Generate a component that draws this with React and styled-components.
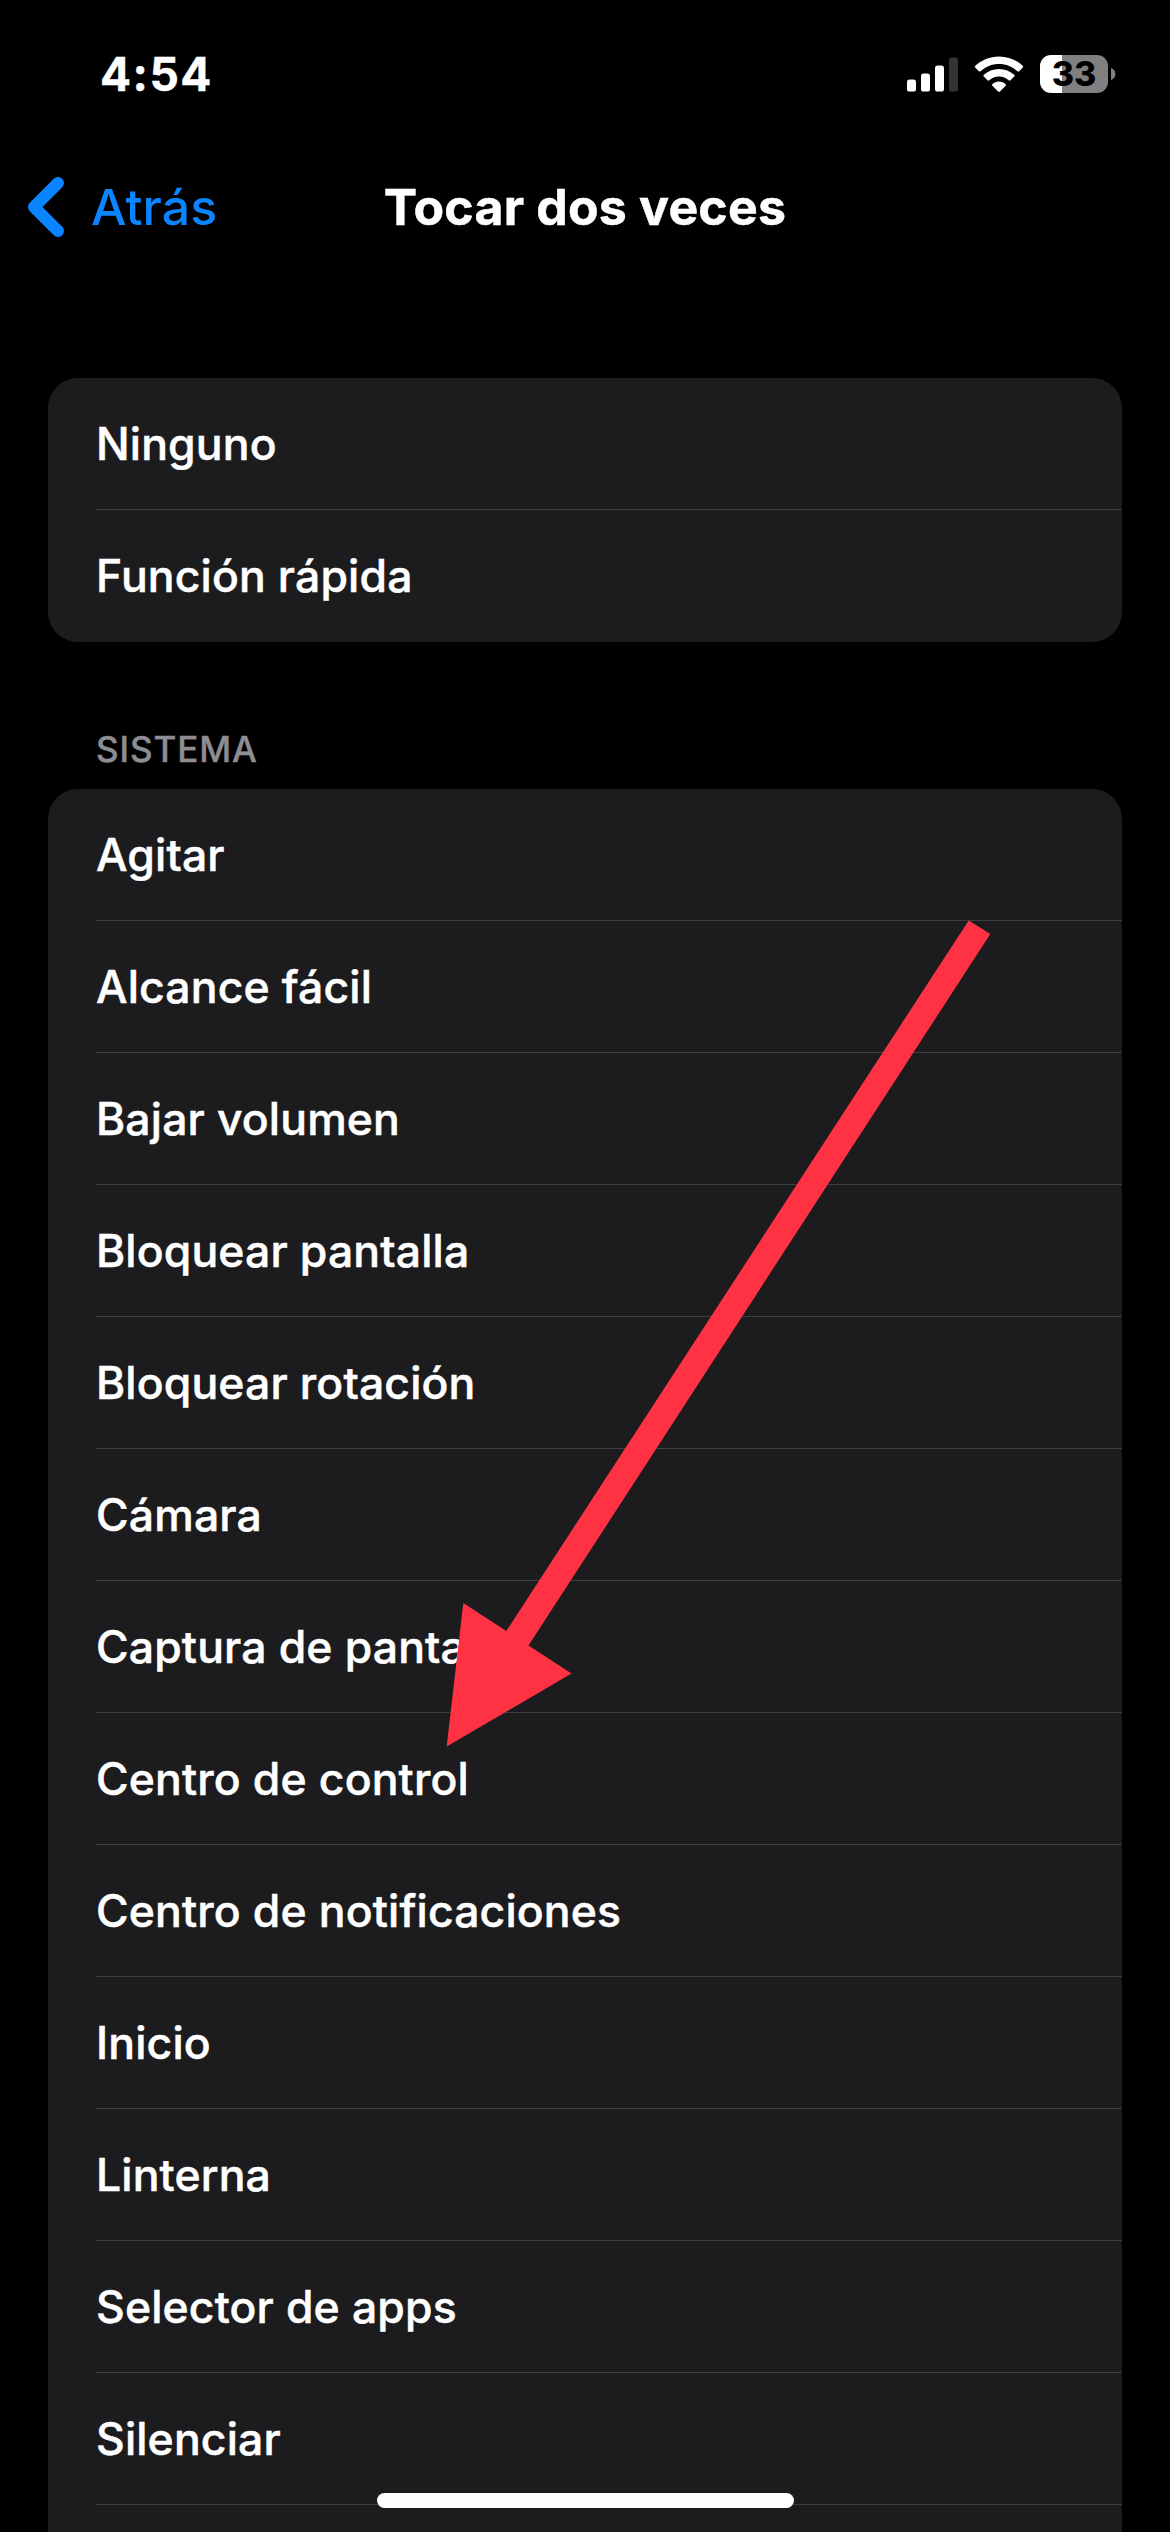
import React from 'react'
import styled, { createGlobalStyle } from 'styled-components'

const GENERAL = ['Ninguno', 'Función rápida']

const SYSTEM = [
  'Agitar',
  'Alcance fácil',
  'Bajar volumen',
  'Bloquear pantalla',
  'Bloquear rotación',
  'Cámara',
  'Captura de pantalla',
  'Centro de control',
  'Centro de notificaciones',
  'Inicio',
  'Linterna',
  'Selector de apps',
  'Silenciar',
]

export default function App() {
  return (
    <>
      <GlobalStyle />
      <Screen>
        <StatusBar>
          <Clock>4:54</Clock>
          <StatusIcons>
            <Signal />
            <Wifi />
            <Battery level={33} />
          </StatusIcons>
        </StatusBar>

        <NavBar>
          <BackButton>
            <Chevron />
            <BackLabel>Atrás</BackLabel>
          </BackButton>
          <Title>Tocar dos veces</Title>
        </NavBar>

        <Content>
          <List items={GENERAL} />
          <SectionTitle>SISTEMA</SectionTitle>
          <List items={SYSTEM} continues />
        </Content>

        <Arrow />
        <HomeIndicator />
      </Screen>
    </>
  )
}

function List({ items, continues = false }) {
  return (
    <Card $open={continues}>
      {items.map((item, i) => (
        <Row key={item} $divider={continues || i < items.length - 1}>
          {item}
        </Row>
      ))}
    </Card>
  )
}

function Signal() {
  return (
    <svg width="51" height="36" viewBox="0 0 51 36" fill="#fff">
      <rect x="0" y="23.6" width="9" height="12" rx="2.6" />
      <rect x="14" y="17.6" width="9" height="18" rx="2.6" />
      <rect x="28" y="9.6" width="9" height="26" rx="2.6" />
      <rect x="42" y="1.6" width="9" height="34" rx="2.6" fill="#333" />
    </svg>
  )
}

function Wifi() {
  return (
    <svg width="50" height="37" viewBox="0 0 50 37" fill="#fff">
      <path d="M25 0.4C34.2 0.4 42.6 4 48.7 9.8c.6.5.6 1.3.1 1.8l-3.6 3.6c-.5.5-1.3.5-1.8 0C38.6 10.6 32.1 7.9 25 7.9S11.4 10.6 6.6 15.2c-.5.5-1.3.5-1.8 0L1.2 11.6c-.5-.5-.5-1.3.1-1.8C7.4 4 15.8.4 25 .4z" />
      <path d="M25 12.9c5.9 0 11.2 2.2 15.2 5.9.5.5.6 1.3 0 1.8l-3.7 3.7c-.5.5-1.2.5-1.8 0-2.5-2.3-5.9-3.8-9.7-3.8s-7.2 1.5-9.7 3.8c-.6.5-1.3.5-1.8 0l-3.7-3.7c-.6-.5-.5-1.3 0-1.8 4-3.7 9.3-5.9 15.2-5.9z" />
      <path d="M25 25.6c2.5 0 4.8.9 6.5 2.4.6.5.6 1.3.1 1.8l-5.7 5.7c-.5.5-1.3.5-1.8 0l-5.7-5.7c-.5-.5-.5-1.3.1-1.8 1.7-1.5 4-2.4 6.5-2.4z" />
    </svg>
  )
}

function Battery({ level }) {
  return (
    <BatteryWrap>
      <BatteryBody $level={level}>{level}</BatteryBody>
      <svg width="5" height="12" viewBox="0 0 5 12">
        <path d="M0 0C2.8 1 4.4 3.2 4.4 6S2.8 11 0 12z" fill="#808080" />
      </svg>
    </BatteryWrap>
  )
}

function Chevron() {
  return (
    <svg width="36" height="60" viewBox="0 0 36 60" fill="none">
      <path
        d="M30 6L6 30L30 54"
        stroke="#0a84ff"
        strokeWidth="12"
        strokeLinecap="round"
        strokeLinejoin="round"
      />
    </svg>
  )
}

function Arrow() {
  return (
    <ArrowSvg width="546" height="828" viewBox="0 0 546 828">
      <path
        d="M522.7 0.5L544.3 14L82.5 725.5L125.5 753.5L0.7 826.5L17.3 683L60.3 711z"
        fill="#ff3244"
      />
    </ArrowSvg>
  )
}

const GlobalStyle = createGlobalStyle`
  * { box-sizing: border-box }
  body {
    margin: 0;
    background: #000;
  }
`

const Screen = styled.div`
  position: relative;
  width: 1170px;
  height: 2532px;
  overflow: hidden;
  background: #000;
  color: #fff;
  font-family: Inter, "Liberation Sans", sans-serif;
`

const StatusBar = styled.div`
  display: flex;
  align-items: center;
  justify-content: space-between;
  height: 148px;
  padding: 0 54px 0 100px;
`

const Clock = styled.div`
  font-size: 46px;
  font-weight: 700;
  line-height: 56px;
  letter-spacing: 1.5px;
  -webkit-text-stroke: 0.4px currentColor;
`

const StatusIcons = styled.div`
  display: flex;
  align-items: center;
  gap: 16px;
`

const BatteryWrap = styled.div`
  display: flex;
  align-items: center;
  gap: 3px;
`

const BatteryBody = styled.div`
  display: flex;
  align-items: center;
  justify-content: center;
  width: 68px;
  height: 38px;
  border-radius: 11px;
  background: linear-gradient(to right, #fff ${p => p.$level}%, #808080 ${p => p.$level}%);
  color: #000;
  font-size: 34px;
  font-weight: 800;
  line-height: 38px;
`

const NavBar = styled.div`
  display: grid;
  grid-template-columns: 1fr auto 1fr;
  align-items: center;
  height: 118px;
  padding: 0 28px;
`

const BackButton = styled.div`
  display: flex;
  align-items: center;
  gap: 27px;
`

const BackLabel = styled.span`
  color: #0a84ff;
  font-size: 50px;
  font-weight: 500;
  line-height: 60px;
  letter-spacing: 0.1px;
`

const Title = styled.h1`
  margin: 0;
  font-size: 50px;
  font-weight: 700;
  line-height: 60px;
  letter-spacing: 0.2px;
  -webkit-text-stroke: 0.5px currentColor;
`

const Content = styled.main`
  padding: 112px 48px 0;
`

const Card = styled.div`
  padding-bottom: ${p => (p.$open ? '132px' : '0')};
  border-radius: 30px;
  background: #1c1c1e;
`

const Row = styled.div`
  display: flex;
  align-items: center;
  height: 132px;
  margin-left: 48px;
  font-size: 44.5px;
  font-weight: 500;
  letter-spacing: 0.15px;
  -webkit-text-stroke: 0.5px currentColor;
  white-space: nowrap;
  background: ${p =>
    p.$divider ? 'linear-gradient(#3d3d40, #3d3d40) bottom / 100% 1px no-repeat' : 'none'};
`

const SectionTitle = styled.h2`
  margin: 0;
  padding: 86px 48px 19px;
  color: #8d8d93;
  font-size: 35px;
  font-weight: 500;
  line-height: 42px;
  letter-spacing: 0.9px;
  -webkit-text-stroke: 0.4px currentColor;
`

const ArrowSvg = styled.svg`
  position: absolute;
  left: 446px;
  top: 920px;
`

const HomeIndicator = styled.div`
  position: absolute;
  left: 377px;
  bottom: 24px;
  width: 417px;
  height: 15px;
  border-radius: 8px;
  background: #fff;
`
